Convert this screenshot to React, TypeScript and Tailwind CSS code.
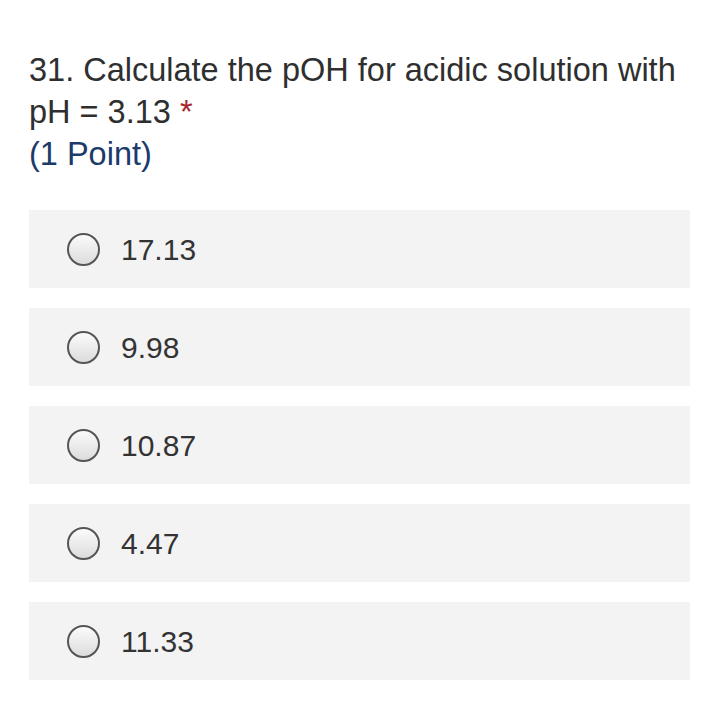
const options = ["17.13", "9.98", "10.87", "4.47", "11.33"];

function Radio() {
  return (
    <span className="block h-[33px] w-[33px] shrink-0 rounded-full border-2 border-[#555] bg-gradient-to-b from-[#fbfbfb] to-[#dcdcdc]" />
  );
}

export default function App() {
  return (
    <div className="min-h-[709px] w-[720px] bg-white pt-[49px] pl-[29px] pr-[20px] font-['Liberation_Sans',Arial,sans-serif]">
      <div className="text-[32.5px] leading-[42px] text-[#2f2f2f]">
        <div>31. Calculate the pOH for acidic solution with</div>
        <div>
          pH = 3.13 <span className="text-[#a4262c]">*</span>
        </div>
        <div className="text-[#1c3a6a]">(1 Point)</div>
      </div>
      <div className="mr-[10px] mt-[35px] flex flex-col gap-[20px]">
        {options.map((o) => (
          <div
            key={o}
            className="flex h-[78px] items-center gap-[21px] bg-[#f3f3f3] pl-[38px]"
          >
            <Radio />
            <span className="text-[30px] text-[#333]">{o}</span>
          </div>
        ))}
      </div>
    </div>
  );
}
